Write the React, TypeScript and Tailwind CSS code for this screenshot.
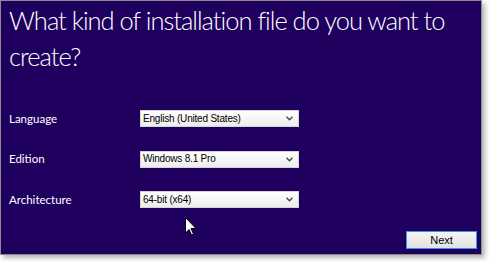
import React from "react";

function Chevron() {
  return (
    <svg width="7" height="5" viewBox="0 0 7 5" className="shrink-0">
      <polyline points="0.5,0.8 3.5,3.8 6.5,0.8" fill="none" stroke="#444" strokeWidth="1.3" />
    </svg>
  );
}

function Select({ value }: { value: string }) {
  return (
    <div className="flex h-[17px] w-[159px] items-center justify-between border border-[#d5d5d5] bg-[linear-gradient(#ffffff,#ececec)] pl-[2px] pr-[5px] text-[10px] tracking-[-0.2px] leading-none text-black [font-family:'Liberation_Sans',sans-serif]">
      <span>{value}</span>
      <Chevron />
    </div>
  );
}

function Row({ label, value }: { label: string; value: string }) {
  return (
    <div className="flex h-[17px] items-center">
      <div className="w-[131px] text-[11.5px] leading-none text-white [font-family:Lato,sans-serif]">{label}</div>
      <Select value={value} />
    </div>
  );
}

export default function App() {
  return (
    <div className="h-[262px] w-[489px] bg-white">
      <div className="relative flex h-[255px] w-[482px] flex-col border border-[#8c8c8c] bg-[#20005e] shadow-[3px_3px_5px_rgba(0,0,0,0.3)]">
        <div className="whitespace-nowrap pl-[8px] pt-[1px] text-[25.5px] tracking-[-1px] leading-[36px] font-light text-white [font-family:Lato,sans-serif]">
          What kind of installation file do you want to
          <br />
          create?
        </div>
        <div className="mt-[36px] flex flex-col gap-[23.5px] pl-[8px]">
          <Row label="Language" value="English (United States)" />
          <Row label="Edition" value="Windows 8.1 Pro" />
          <Row label="Architecture" value="64-bit (x64)" />
        </div>
        <div className="mt-auto flex justify-end pb-[5px] pr-[4px]">
          <div className="flex h-[18px] w-[71px] items-center justify-center border border-[#3399e6] bg-[linear-gradient(#f5f5f5,#e2e2e2)] text-[11px] leading-none text-black [font-family:'Liberation_Sans',sans-serif]">
            Next
          </div>
        </div>
        <svg className="absolute left-[184px] top-[216px]" width="12" height="19" viewBox="0 0 12 19">
          <path d="M0.5 0.5 L0.5 16 L4 12.5 L6.5 18 L8.5 17 L6 11.5 L11 11.5 Z" fill="white" stroke="black" strokeWidth="1" />
        </svg>
      </div>
    </div>
  );
}
